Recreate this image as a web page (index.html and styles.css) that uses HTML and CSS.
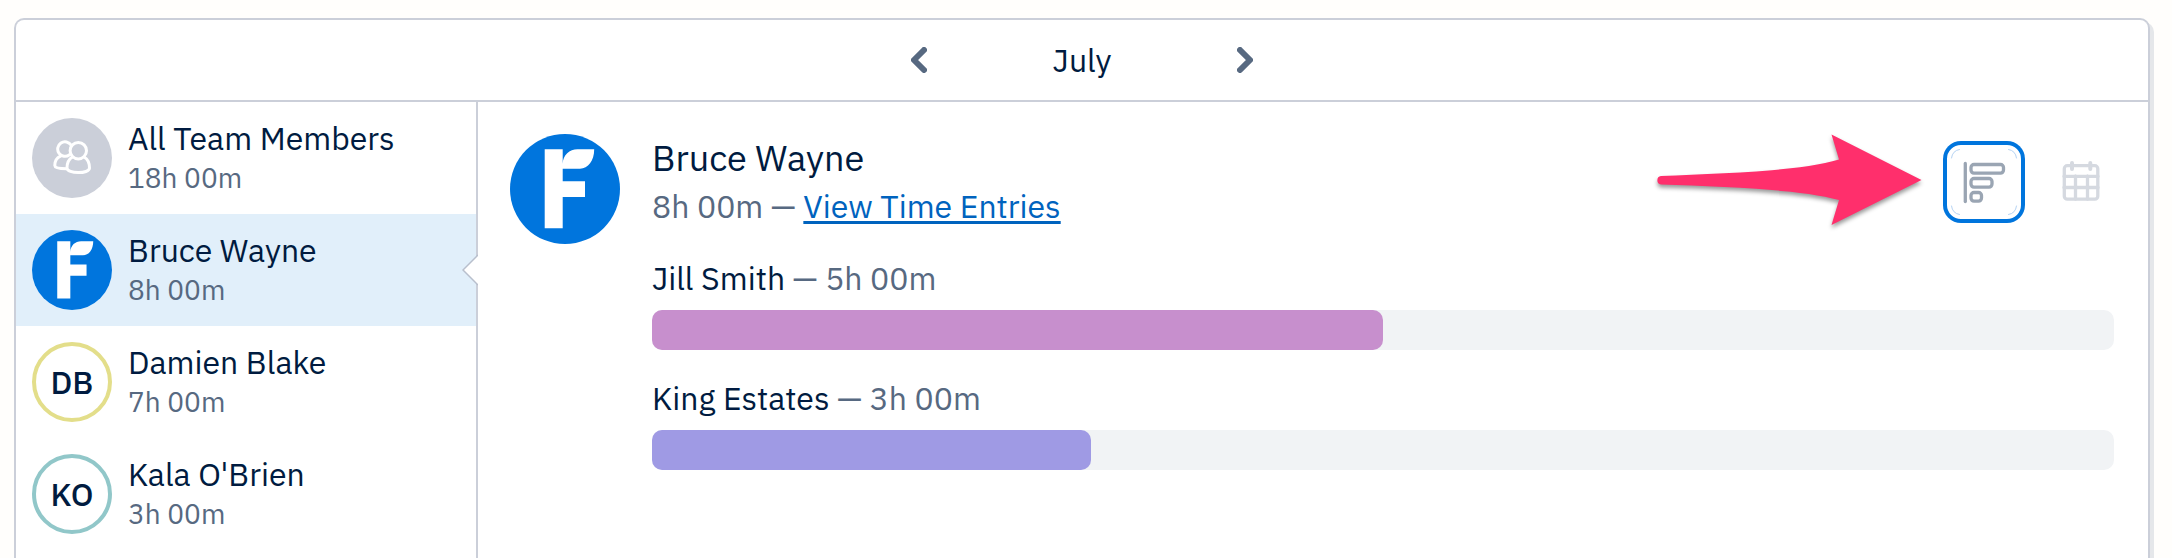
FILE: index.html
```html
<!DOCTYPE html>
<html lang="en">
<head>
  <meta charset="UTF-8">
  <title>Team Utilization</title>
  <link rel="stylesheet" href="styles.css">
</head>
<body>

<svg class="defs">
  <symbol id="logo" viewBox="0 0 110 110">
    <path d="M34.7 15.3h18v14.500C53 21 59.500 15.3 67.500 15.3H84.200C84.200 27 78 34.700 70 34.700H52.700v12.600H75V63H52.700v31.300h-18z"/>
  </symbol>
</svg>

<div class="card">
  <div class="month-nav">
    <svg class="chevron" viewBox="0 0 16 26"><path d="M13 3L3 13l10 10"/></svg>
    <span class="month">July</span>
    <svg class="chevron" viewBox="0 0 16 26"><path d="M3 3l10 10L3 23"/></svg>
  </div>

  <div class="content">
    <div class="sidebar">
      <div class="member">
        <div class="avatar avatar-all">
          <svg class="team-icon" viewBox="0 0 40 36">
            <path d="M17.500 14.800A7.300 7.300 0 1 1 19.200 5.200"/>
            <path d="M8.500 16.200C4.500 18 2.800 21.500 2.800 25.500c0 2.500 4.500 3.200 11.700 3.200"/>
            <circle cx="26.300" cy="10.700" r="8.200"/>
            <path d="M20.500 17c-3.500 2-5.500 6-5.500 11 0 6 22.500 6.300 22.500 0 0-4.500-2-9-5.500-11"/>
          </svg>
        </div>
        <div class="info">
          <div class="name all">All Team Members</div>
          <div class="hours">18h 00m</div>
        </div>
      </div>
      <div class="member selected">
        <div class="avatar avatar-logo"><svg><use href="#logo"/></svg></div>
        <div class="info">
          <div class="name">Bruce Wayne</div>
          <div class="hours">8h 00m</div>
        </div>
        <svg class="notch" viewBox="0 0 16 32"><path d="M16 1L1 16l15 15"/></svg>
      </div>
      <div class="member">
        <div class="avatar avatar-db">DB</div>
        <div class="info">
          <div class="name">Damien Blake</div>
          <div class="hours">7h 00m</div>
        </div>
      </div>
      <div class="member">
        <div class="avatar avatar-ko">KO</div>
        <div class="info">
          <div class="name">Kala O'Brien</div>
          <div class="hours">3h 00m</div>
        </div>
      </div>
    </div>

    <div class="main">
      <div class="avatar avatar-logo large"><svg><use href="#logo"/></svg></div>
      <div class="details">
        <div class="heading">
          <div>
            <div class="title">Bruce Wayne</div>
            <div class="total">8h 00m — <a href="#">View Time Entries</a></div>
          </div>
          <div class="views">
            <svg class="arrow" viewBox="0 0 280 110">
              <path d="M11 46C70 43.500 150 41.500 189 29.500L181.500 4.500L271.500 50L181.500 95L189 70C150 59 70 56.500 11 54.500A4.300 4.300 0 0 1 11 46z"/>
            </svg>
            <button class="view active">
              <svg viewBox="0 0 82 82">
                <path class="corner" d="M8.500 17q1-7.500 8-8.500M73.500 17q-1-7.500-8-8.500M8.500 65q1 7.500 8 8.500M73.500 65q-1 7.500-8 8.500"/>
                <path d="M22.300 22.500v38"/>
                <rect x="28" y="23.500" width="32.500" height="8.600" rx="3"/>
                <rect x="28" y="37.500" width="21" height="8.600" rx="3"/>
                <rect x="28" y="51.500" width="10.500" height="8.600" rx="3"/>
              </svg>
            </button>
            <button class="view">
              <svg viewBox="0 0 82 82">
                <rect x="24.300" y="24.700" width="33.500" height="33.500" rx="3"/>
                <path d="M24 35.300h34M24 46.500h34M35.500 35v23M47.500 35v23"/>
                <path class="ring" d="M32 22v6M50.300 22v6"/>
              </svg>
            </button>
          </div>
        </div>

        <div class="project">
          <div class="label"><span>Jill Smith</span> — 5h 00m</div>
          <div class="track"><div class="fill pink" style="width: 50%"></div></div>
        </div>
        <div class="project">
          <div class="label"><span>King Estates</span> — 3h 00m</div>
          <div class="track"><div class="fill purple" style="width: 30%"></div></div>
        </div>
      </div>
    </div>
  </div>
</div>

</body>
</html>
```
FILE: styles.css
```css
* {
  box-sizing: border-box;
}

body {
  margin: 0;
  padding: 18px 22px 0 14px;
  background: #fffefc;
  color: #001b40;
  font-family: "IBM Plex Sans", Roboto, sans-serif;
  font-size: 32px;
  line-height: 40px;
}

.defs {
  display: none;
}

.card {
  height: 540px;
  display: flex;
  flex-direction: column;
  background: #fff;
  border: 2px solid #cbcfd9;
  border-bottom: 0;
  border-radius: 10px 10px 0 0;
  box-shadow: 4px 4px 0 #e5e7ea;
}

.month-nav {
  height: 82px;
  display: flex;
  justify-content: center;
  align-items: center;
  border-bottom: 2px solid #cbcfd9;
}

.month {
  width: 310px;
  text-align: center;
}

.chevron {
  width: 16px;
  height: 26px;
  fill: none;
  stroke: #576981;
  stroke-width: 6;
  stroke-linecap: round;
  stroke-linejoin: round;
}

.content {
  flex: 1;
  display: flex;
}

.sidebar {
  width: 462px;
  border-right: 2px solid #cbcfd9;
}

.member {
  position: relative;
  height: 112px;
  padding: 16px;
  display: flex;
  gap: 16px;
}

.selected {
  background: #e1effa;
}

.avatar {
  flex: none;
  width: 80px;
  height: 80px;
  border-radius: 50%;
  display: flex;
  justify-content: center;
  align-items: center;
  font-weight: 500;
}

.avatar-all {
  background: #cbcfd9;
}

.team-icon {
  width: 40px;
  height: 36px;
  fill: none;
  stroke: #fff;
  stroke-width: 3;
  stroke-linecap: round;
}

.avatar-logo {
  background: #0075dd;
}

.avatar-logo svg {
  width: 100%;
  height: 100%;
  fill: #fff;
}

.avatar-db {
  border: 4px solid #e3de8a;
}

.avatar-ko {
  border: 4px solid #91c7c9;
}

.hours {
  font-size: 28px;
  line-height: 40px;
  color: #576981;
}

/* sits over the sidebar border */
.notch {
  position: absolute;
  right: -2px;
  top: 40px;
  width: 16px;
  height: 32px;
  fill: #fff;
  stroke: #b8bfcc;
  stroke-width: 1.5;
}

.main {
  flex: 1;
  padding: 32px 34px 0 32px;
  display: flex;
  gap: 32px;
}

.large {
  width: 110px;
  height: 110px;
}

.details {
  flex: 1;
}

.heading {
  height: 124px;
  display: flex;
  justify-content: space-between;
}

.title {
  font-size: 36px;
  line-height: 48px;
}

.total,
.label {
  color: #576981;
}

.total {
  line-height: 48px;
}

.total a {
  color: #0063be;
  text-decoration-thickness: 3px;
  text-underline-offset: 3px;
}

.views {
  display: flex;
  margin: 7px -8px 0 0;
}

.arrow {
  width: 280px;
  height: 110px;
  margin: -11px 13px 0 0;
  fill: #ff2f6c;
  filter: drop-shadow(0 3px 2px rgba(0, 0, 0, 0.4));
}

.view {
  width: 82px;
  height: 82px;
  margin-right: 15px;
  padding: 0;
  border: 0;
  background: none;
  border-radius: 18px;
}

.view:last-child {
  margin-right: 0;
}

.view svg {
  display: block;
  fill: none;
  stroke: #d5d9e0;
  stroke-width: 3.3;
  stroke-linecap: round;
}

.view.active {
  box-shadow: inset 0 0 0 4px #0075dd;
}

.view.active svg {
  stroke: #9aa5b3;
}

.view.active .corner {
  stroke: #b5d3f3;
  stroke-width: 1;
}

.view .ring {
  stroke-width: 4;
}

.project {
  height: 120px;
}

.label {
  height: 52px;
}

.label span {
  color: #001b40;
}

.track {
  height: 40px;
  border-radius: 10px;
  background: #f1f3f5;
}

.fill {
  height: 100%;
  border-radius: 10px;
}

.pink {
  background: #c78fcd;
}

.purple {
  background: #9f9ae4;
}
```
